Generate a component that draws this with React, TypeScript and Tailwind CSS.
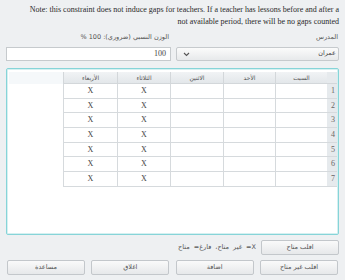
import React from "react";

const DAYS = ["السبت", "الأحد", "الاثنين", "الثلاثاء", "الأربعاء"];
const ROWS = [1, 2, 3, 4, 5, 6, 7];
// columns marked unavailable (index into DAYS)
const MARKED = [3, 4];

const arabic = { fontFamily: '"DejaVu Sans", sans-serif' };
const serif = { fontFamily: '"Liberation Serif", serif' };

function Button({ label }: { label: string }) {
  return (
    <button
      className="flex h-[15px] w-[78px] items-center justify-center rounded-[2px] border border-[#c3c7cb] bg-gradient-to-b from-[#fafafa] to-[#e6e8ea] text-[6.5px] text-[#555]"
      style={arabic}
    >
      {label}
    </button>
  );
}

export default function App() {
  return (
    <div
      dir="rtl"
      className="flex h-[280px] w-[345px] flex-col bg-[#eef0f2] px-[6px] text-[#222]"
    >
      {/* Note */}
      <p
        dir="ltr"
        className="pt-[4px] text-right text-[8px] leading-[12px] text-[#2a2a2a]"
        style={serif}
      >
        Note: this constraint does not induce gaps for teachers. If a teacher has lessons before and after a
        <br />
        not available period, there will be no gaps counted
      </p>

      {/* Labels */}
      <div className="mt-[5px] flex h-[10px] items-center text-[6.5px] text-[#555]" style={arabic}>
        <div className="w-[168px] pr-[1px]">المدرس</div>
        <div className="flex-1 pr-[2px]">الوزن النسبي (ضروري): 100 %</div>
      </div>

      {/* Inputs */}
      <div className="mt-[4px] flex h-[14px] gap-[5px]">
        <div
          className="flex w-[163px] items-center justify-between rounded-[2px] border border-[#c6cacd] bg-gradient-to-b from-[#fbfbfb] to-[#e7e9eb] pr-[2px] pl-[4px] text-[6.5px] text-[#444]"
          style={arabic}
        >
          <span>عمران</span>
          <svg width="7" height="5" viewBox="0 0 7 5" className="ml-[2px]">
            <path d="M1 1 L3.5 3.5 L6 1" fill="none" stroke="#555" strokeWidth="1.1" />
          </svg>
        </div>
        <div
          className="flex flex-1 items-center border border-[#c6cacd] bg-white pr-[4px] text-[8px] text-[#444]"
          style={serif}
        >
          100
        </div>
      </div>

      {/* Table frame */}
      <div className="mt-[7px] h-[167px] rounded-[2px] border border-[#86d4d8] bg-white p-[1px] shadow-[inset_0_0_0_1px_#d5f0f1]">
        <div className="grid grid-cols-[10px_52px_52px_53px_53px_54px_1fr] pt-[2px] pl-[1px]">
          {/* header row */}
          <div className="h-[12px] border-b border-[#d3d7da] bg-[#e6eaed]" />
          {DAYS.map((d) => (
            <div
              key={d}
              className="flex h-[12px] items-center justify-center border-b border-l border-[#d3d7da] bg-gradient-to-b from-[#f1f3f5] to-[#e3e7ea] text-[6px] text-[#555]"
              style={arabic}
            >
              {d}
            </div>
          ))}
          <div className="h-[12px] bg-[#f5f8fa]" />

          {ROWS.map((r) => (
            <React.Fragment key={r}>
              <div
                className="flex h-[14.7px] items-center justify-start border-b border-[#d6dadd] bg-[#e6eaed] pr-[2px] text-[8px] text-[#666]"
                style={serif}
              >
                {r}
              </div>
              {DAYS.map((d, i) => (
                <div
                  key={d}
                  className="flex h-[14.7px] items-center justify-center border-b border-l border-[#d6dadd] text-[8px] text-[#444]"
                  style={serif}
                >
                  {MARKED.includes(i) ? "X" : ""}
                </div>
              ))}
              <div className="h-[14.7px]" />
            </React.Fragment>
          ))}
        </div>
      </div>

      {/* Toggle available + legend */}
      <div className="mt-[5px] flex items-center gap-[5px]">
        <Button label="اقلب متاح" />
        <span className="text-[6.5px] [word-spacing:2px] text-[#555]" style={arabic}>
          X= غير متاح، فارغ= متاح
        </span>
      </div>

      {/* Bottom buttons */}
      <div className="mt-[5px] flex justify-between px-[1px]">
        <Button label="اقلب غير متاح" />
        <Button label="اضافة" />
        <Button label="اغلاق" />
        <Button label="مساعدة" />
      </div>
    </div>
  );
}
